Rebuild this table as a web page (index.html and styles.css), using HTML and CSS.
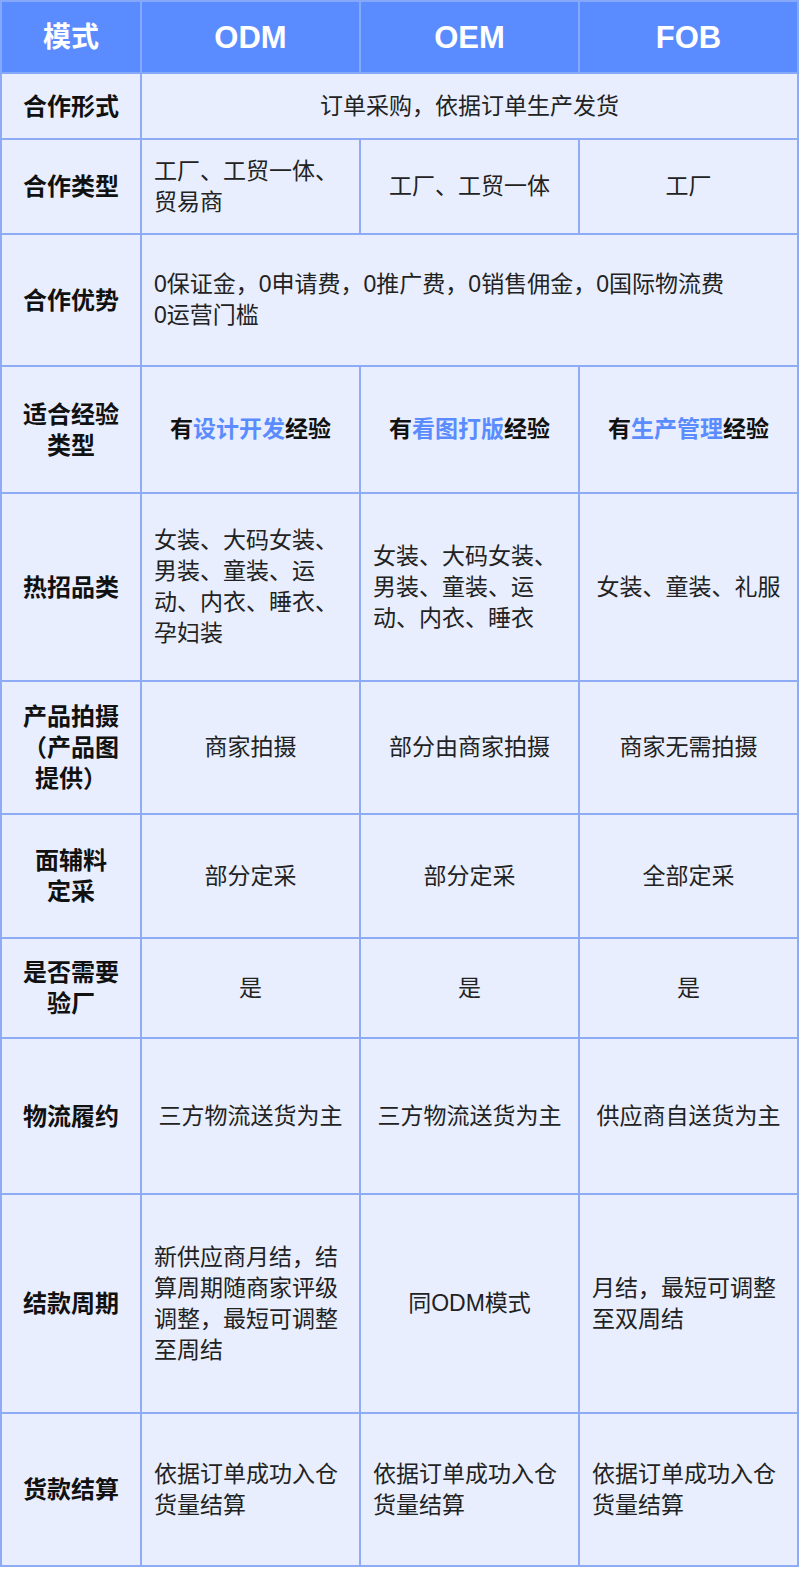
FILE: index.html
```html
<!DOCTYPE html>
<html lang="zh-CN">
<head>
<meta charset="utf-8">
<title>模式对比</title>
<link rel="stylesheet" href="styles.css">
</head>
<body>
<table class="grid">
  <colgroup>
    <col class="c-label">
    <col class="c-data">
    <col class="c-data">
    <col class="c-data">
  </colgroup>
  <thead>
    <tr class="h-head">
      <th>模式</th>
      <th class="latin">ODM</th>
      <th class="latin">OEM</th>
      <th class="latin">FOB</th>
    </tr>
  </thead>
  <tbody>
    <tr class="h-r1">
      <th>合作形式</th>
      <td colspan="3" class="center">订单采购，依据订单生产发货</td>
    </tr>
    <tr class="h-r2">
      <th>合作类型</th>
      <td>工厂、工贸一体、贸易商</td>
      <td class="center">工厂、工贸一体</td>
      <td class="center">工厂</td>
    </tr>
    <tr class="h-r3">
      <th>合作优势</th>
      <td colspan="3">0保证金，0申请费，0推广费，0销售佣金，0国际物流费<br>0运营门槛</td>
    </tr>
    <tr class="h-r4">
      <th>适合经验类型</th>
      <td class="center strong">有<span class="hl">设计开发</span>经验</td>
      <td class="center strong">有<span class="hl">看图打版</span>经验</td>
      <td class="center strong">有<span class="hl">生产管理</span>经验</td>
    </tr>
    <tr class="h-r5">
      <th>热招品类</th>
      <td>女装、大码女装、男装、童装、运动、内衣、睡衣、孕妇装</td>
      <td>女装、大码女装、男装、童装、运动、内衣、睡衣</td>
      <td class="center">女装、童装、礼服</td>
    </tr>
    <tr class="h-r6">
      <th>产品拍摄（产品图提供）</th>
      <td class="center">商家拍摄</td>
      <td class="center">部分由商家拍摄</td>
      <td class="center">商家无需拍摄</td>
    </tr>
    <tr class="h-r7">
      <th>面辅料<br>定采</th>
      <td class="center">部分定采</td>
      <td class="center">部分定采</td>
      <td class="center">全部定采</td>
    </tr>
    <tr class="h-r8">
      <th>是否需要验厂</th>
      <td class="center">是</td>
      <td class="center">是</td>
      <td class="center">是</td>
    </tr>
    <tr class="h-r9">
      <th>物流履约</th>
      <td class="center">三方物流送货为主</td>
      <td class="center">三方物流送货为主</td>
      <td class="center">供应商自送货为主</td>
    </tr>
    <tr class="h-r10">
      <th>结款周期</th>
      <td>新供应商月结，结算周期随商家评级调整，最短可调整至周结</td>
      <td class="center">同ODM模式</td>
      <td>月结，最短可调整至双周结</td>
    </tr>
    <tr class="h-r11">
      <th>货款结算</th>
      <td>依据订单成功入仓货量结算</td>
      <td>依据订单成功入仓货量结算</td>
      <td>依据订单成功入仓货量结算</td>
    </tr>
  </tbody>
</table>
</body>
</html>
```

FILE: styles.css
```css
html, body {
  margin: 0;
  padding: 0;
  background: #ffffff;
}

body {
  font-family: "Liberation Sans", "Noto Sans CJK SC", sans-serif;
  color: #222222;
}

.grid {
  border-collapse: collapse;
  table-layout: fixed;
  width: 798px;
  background: #e8eefd;
}

.c-label { width: 140px; }
.c-data { width: 219px; }

.grid th,
.grid td {
  border: 2px solid #8eacf6;
  padding: 0 12px;
  vertical-align: middle;
  font-size: 23px;
  line-height: 31px;
  word-break: break-all;
}

.grid tbody th {
  font-weight: 700;
  font-size: 24px;
  text-align: center;
  color: #111111;
  padding: 0 16px;
}

.grid td {
  text-align: left;
  font-weight: 400;
}

.grid td.center { text-align: center; }
.grid td.strong { font-weight: 700; color: #111111; }

.hl { color: #5b8cff; }

.grid thead th {
  background: #5b8cff;
  color: #ffffff;
  font-size: 28px;
  font-weight: 700;
  border-color: #86a8fb;
}

.grid thead th.latin { font-size: 31px; }

.h-head th { height: 70px; }
.h-r1 > * { height: 64px; }
.h-r2 > * { height: 93px; }
.h-r3 > * { height: 130px; }
.h-r4 > * { height: 125px; }
.h-r5 > * { height: 186px; }
.h-r6 > * { height: 131px; }
.h-r7 > * { height: 122px; }
.h-r8 > * { height: 98px; }
.h-r9 > * { height: 154px; }
.h-r10 > * { height: 217px; }
.h-r11 > * { height: 151px; }
```
